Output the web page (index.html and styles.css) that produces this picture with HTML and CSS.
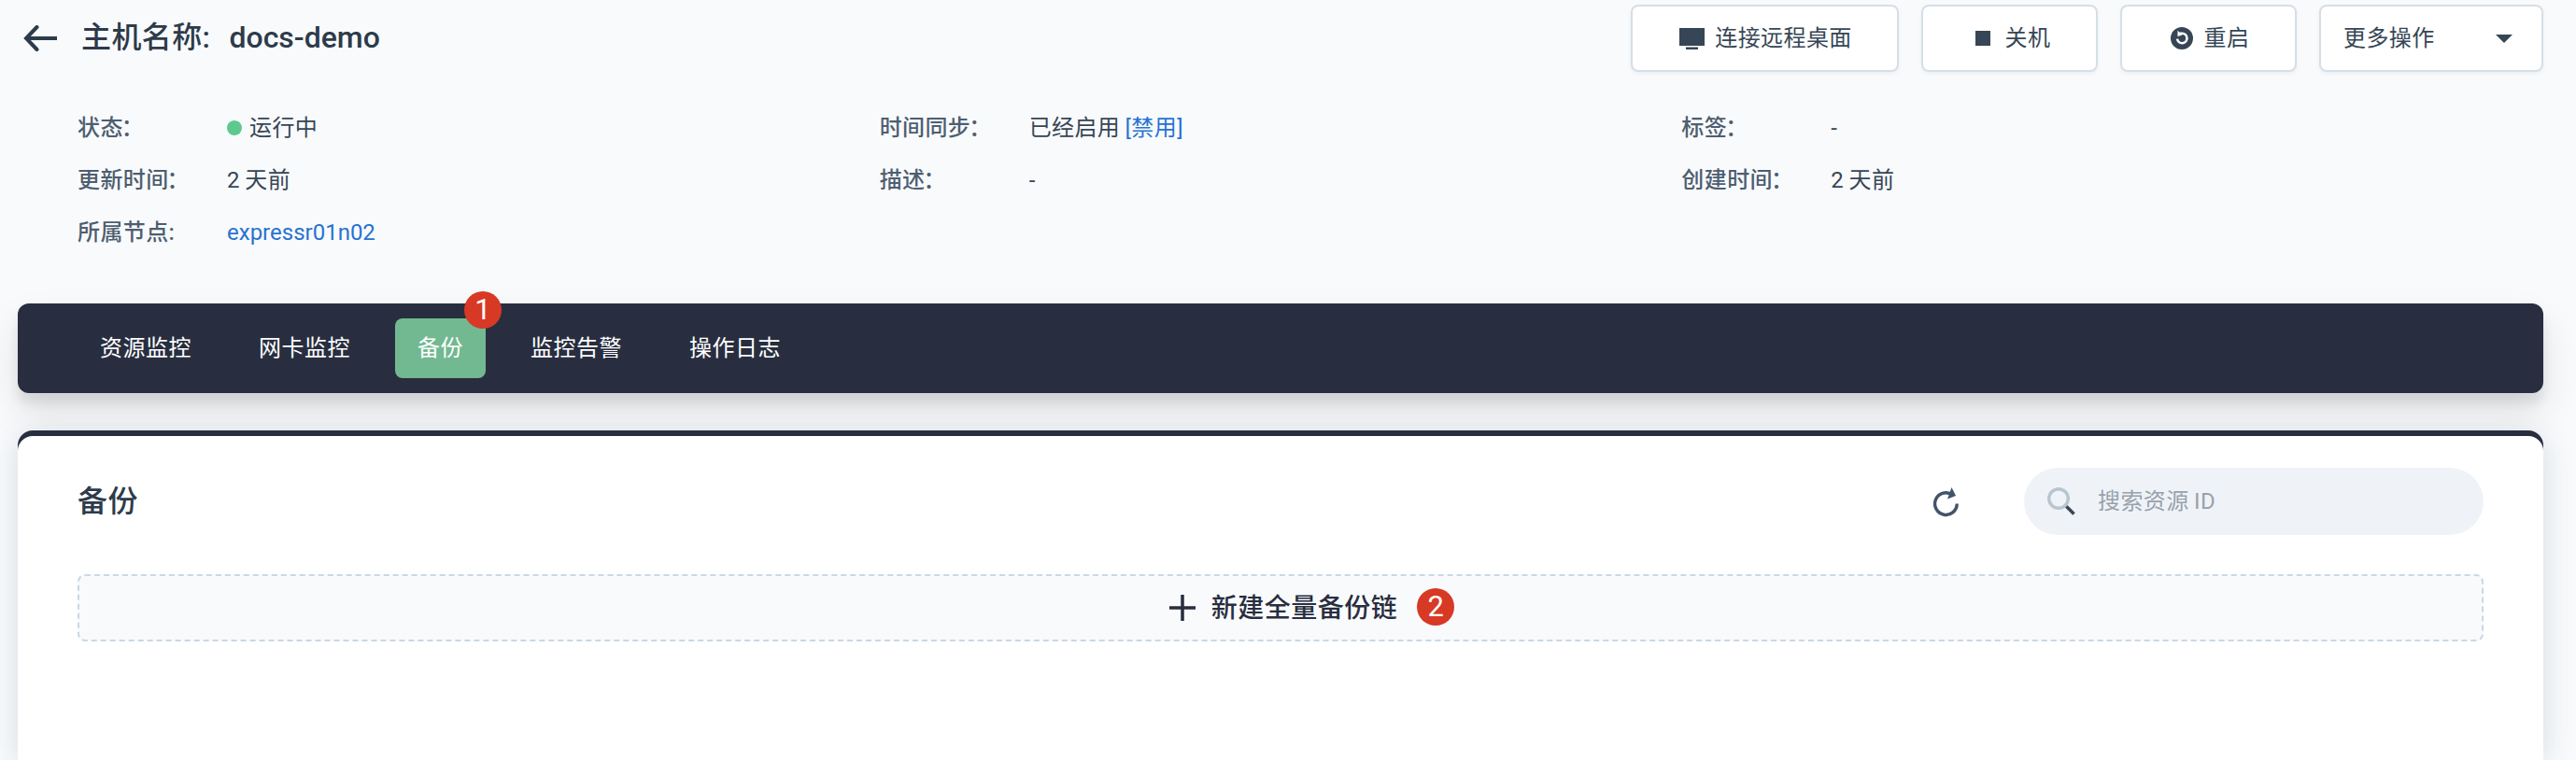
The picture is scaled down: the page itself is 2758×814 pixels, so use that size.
FILE: index.html
```html
<!DOCTYPE html>
<html lang="zh-CN">
<head>
<meta charset="utf-8">
<title>主机名称: docs-demo</title>
<link rel="stylesheet" href="styles.css">
</head>
<body>
<header class="header">
  <svg class="back" width="36" height="28" viewBox="0 0 36 28"><path d="M36 14H3" stroke="#2d3b4a" stroke-width="4"/><path d="M14.500 2L3 14l11.500 12" fill="none" stroke="#2d3b4a" stroke-width="4" stroke-linecap="round"/></svg>
  <h1 class="title">主机名称:<span class="host">docs-demo</span></h1>
  <div class="actions">
    <button class="btn btn-remote"><svg width="27" height="24" viewBox="0 0 27 24"><path d="M0 1h27v19H0zM7 21.500h13V24H7z" fill="#364656"/></svg><span>连接远程桌面</span></button>
    <button class="btn btn-stop"><svg width="16" height="16" viewBox="0 0 16 16"><path d="M0 0h16v16H0z" fill="#364656"/></svg><span>关机</span></button>
    <button class="btn btn-restart"><svg width="24" height="24" viewBox="0 0 24 24"><circle cx="12" cy="12" r="12" fill="#364656"/><path d="M9.500 6.800h2.800a5.200 5.200 0 1 1-5.200 5.800" fill="none" stroke="#fff" stroke-width="2.600"/><path d="M7.500 3.800v6.300l5-1.500z" fill="#fff"/></svg><span>重启</span></button>
    <button class="btn btn-more"><span>更多操作</span><svg width="18" height="9" viewBox="0 0 18 9"><path d="M0 0h18L9 9z" fill="#364656"/></svg></button>
  </div>
</header>
<dl class="info">
  <div class="item"><dt>状态<span class="colon">：</span></dt><dd><i class="dot"></i>运行中</dd></div>
  <div class="item"><dt>时间同步<span class="colon">：</span></dt><dd>已经启用 <a class="link action">[禁用]</a></dd></div>
  <div class="item"><dt>标签<span class="colon">：</span></dt><dd>-</dd></div>
  <div class="item"><dt>更新时间<span class="colon">：</span></dt><dd>2 天前</dd></div>
  <div class="item"><dt>描述<span class="colon">：</span></dt><dd>-</dd></div>
  <div class="item"><dt>创建时间<span class="colon">：</span></dt><dd>2 天前</dd></div>
  <div class="item"><dt>所属节点:</dt><dd><a class="link">expressr01n02</a></dd></div>
</dl>
<nav class="tabs">
  <a class="tab">资源监控</a>
  <a class="tab">网卡监控</a>
  <a class="tab active">备份<span class="badge corner">1</span></a>
  <a class="tab">监控告警</a>
  <a class="tab">操作日志</a>
</nav>
<main class="panel">
  <div class="panel-head">
    <h2 class="panel-title">备份</h2>
    <svg class="refresh" width="28" height="32" viewBox="0 0 28 32"><path d="M25.200 17.500A11.800 11.800 0 1 1 19.500 7.500" fill="none" stroke="#42536a" stroke-width="3.400"/><path d="M19.500 0l4.500 9-9 3.500z" fill="#42536a"/></svg>
    <div class="search"><svg width="30" height="30" viewBox="0 0 30 30"><path d="M20 20l8.500 8.500" stroke="#364656" stroke-width="3.500"/><circle cx="12" cy="12" r="10.300" fill="none" stroke="#b8c5d0" stroke-width="3.400"/></svg><span>搜索资源 ID</span></div>
  </div>
  <button class="create"><svg width="28" height="28" viewBox="0 0 28 28"><path d="M14 0v28M0 14h28" stroke="#282e40" stroke-width="3.500"/></svg><span>新建全量备份链</span><span class="badge">2</span></button>
</main>
</body>
</html>
```

FILE: styles.css
```css
* { box-sizing: border-box; }
body {
  margin: 0;
  height: 814px;
  padding: 5px 35px 0 19px;
  overflow: hidden;
  display: flex;
  flex-direction: column;
  background: #f9fafc;
  color: #364656;
  font: 24px/36px Roboto, "Noto Sans CJK SC", sans-serif;
  letter-spacing: 0.4px;
}
h1, h2, dl, dd { margin: 0; }
svg { flex: none; display: block; }
.header { display: flex; align-items: center; height: 72px; padding-left: 6px; }
.title { margin: 0 0 2px 26px; font-size: 32px; font-weight: 500; line-height: 48px; color: #2d3b4a; }
.host { margin-left: 20px; letter-spacing: 0; }
.actions { display: flex; gap: 24px; margin-left: auto; }
.btn {
  display: flex;
  align-items: center;
  justify-content: center;
  height: 72px;
  padding: 0;
  background: #fff;
  border: 2px solid #d5dfe7;
  border-radius: 8px;
  box-shadow: 0 2px 4px rgba(0, 0, 0, .05);
  color: inherit;
  font: inherit;
  letter-spacing: inherit;
}
.btn-remote { width: 287px; gap: 11px; padding-left: 2px; }
.btn-stop { width: 189px; gap: 16px; padding-left: 7px; }
.btn-restart { width: 189px; gap: 12px; padding-left: 3px; }
.btn-more { width: 240px; padding: 0 31px 0 24px; justify-content: space-between; }
.info { display: grid; grid-template-columns: repeat(3, 1fr); grid-auto-rows: 56px; padding: 32px 64px 0; height: 248px; flex: none; }
.item { display: flex; align-items: center; word-spacing: -1px; }
.item dt { width: 160px; font-weight: 500; color: #4d5e70; }
.colon { margin-left: -2px; }
.dot { display: inline-block; width: 16px; height: 16px; margin-right: 8px; border-radius: 50%; background: #5ec98f; vertical-align: 0; }
.link { color: #2872d1; letter-spacing: 0; }
.action { letter-spacing: 0.4px; }
.tabs {
  display: flex;
  align-items: center;
  gap: 24px;
  flex: none;
  height: 96px;
  padding: 0 64px;
  border-radius: 12px;
  background: #282e40;
  box-shadow: 0 12px 12px rgba(0, 0, 0, .08), 0 20px 40px rgba(0, 0, 0, .1);
  letter-spacing: 0.5px;
}
.tab { position: relative; padding: 0 24px; line-height: 64px; border-radius: 8px; color: #fff; }
.active { background: #72b991; }
.badge { width: 40px; height: 40px; border-radius: 50%; background: #d73925; color: #fff; font-size: 31px; font-weight: 400; line-height: 40px; text-align: center; letter-spacing: 0; }
.corner { position: absolute; right: -17px; top: -29px; }
.panel {
  flex: 1;
  margin-top: 46px;
  padding: 34px 64px 0;
  border-radius: 16px 16px 0 0;
  background: #fff;
  box-shadow: 0 -6px 0 #282e40, 0 0 32px rgba(45, 75, 95, .18);
}
.panel-head { display: flex; align-items: center; height: 72px; }
.panel-title { font-size: 32px; font-weight: 500; color: #2d3b4a; }
.refresh { margin: 2px -1px 0 auto; }
.search { display: flex; align-items: center; gap: 24px; width: 492px; height: 72px; margin-left: 70px; padding-left: 25px; border-radius: 36px; background: #eff3f8; color: #98a2ac; word-spacing: -1px; }
.create {
  display: flex;
  align-items: center;
  justify-content: center;
  width: 100%;
  height: 72px;
  margin-top: 42px;
  padding: 0;
  border: 2px dashed #cad8e4;
  border-radius: 8px;
  background: #f9fafc;
  color: #282e40;
  font: inherit;
  font-size: 28px;
  font-weight: 500;
  letter-spacing: 0.5px;
}
.create svg { margin-right: 17px; }
.create span { margin-top: 1px; }
.create .badge { margin: -3px -67px 0 21px; }
```
